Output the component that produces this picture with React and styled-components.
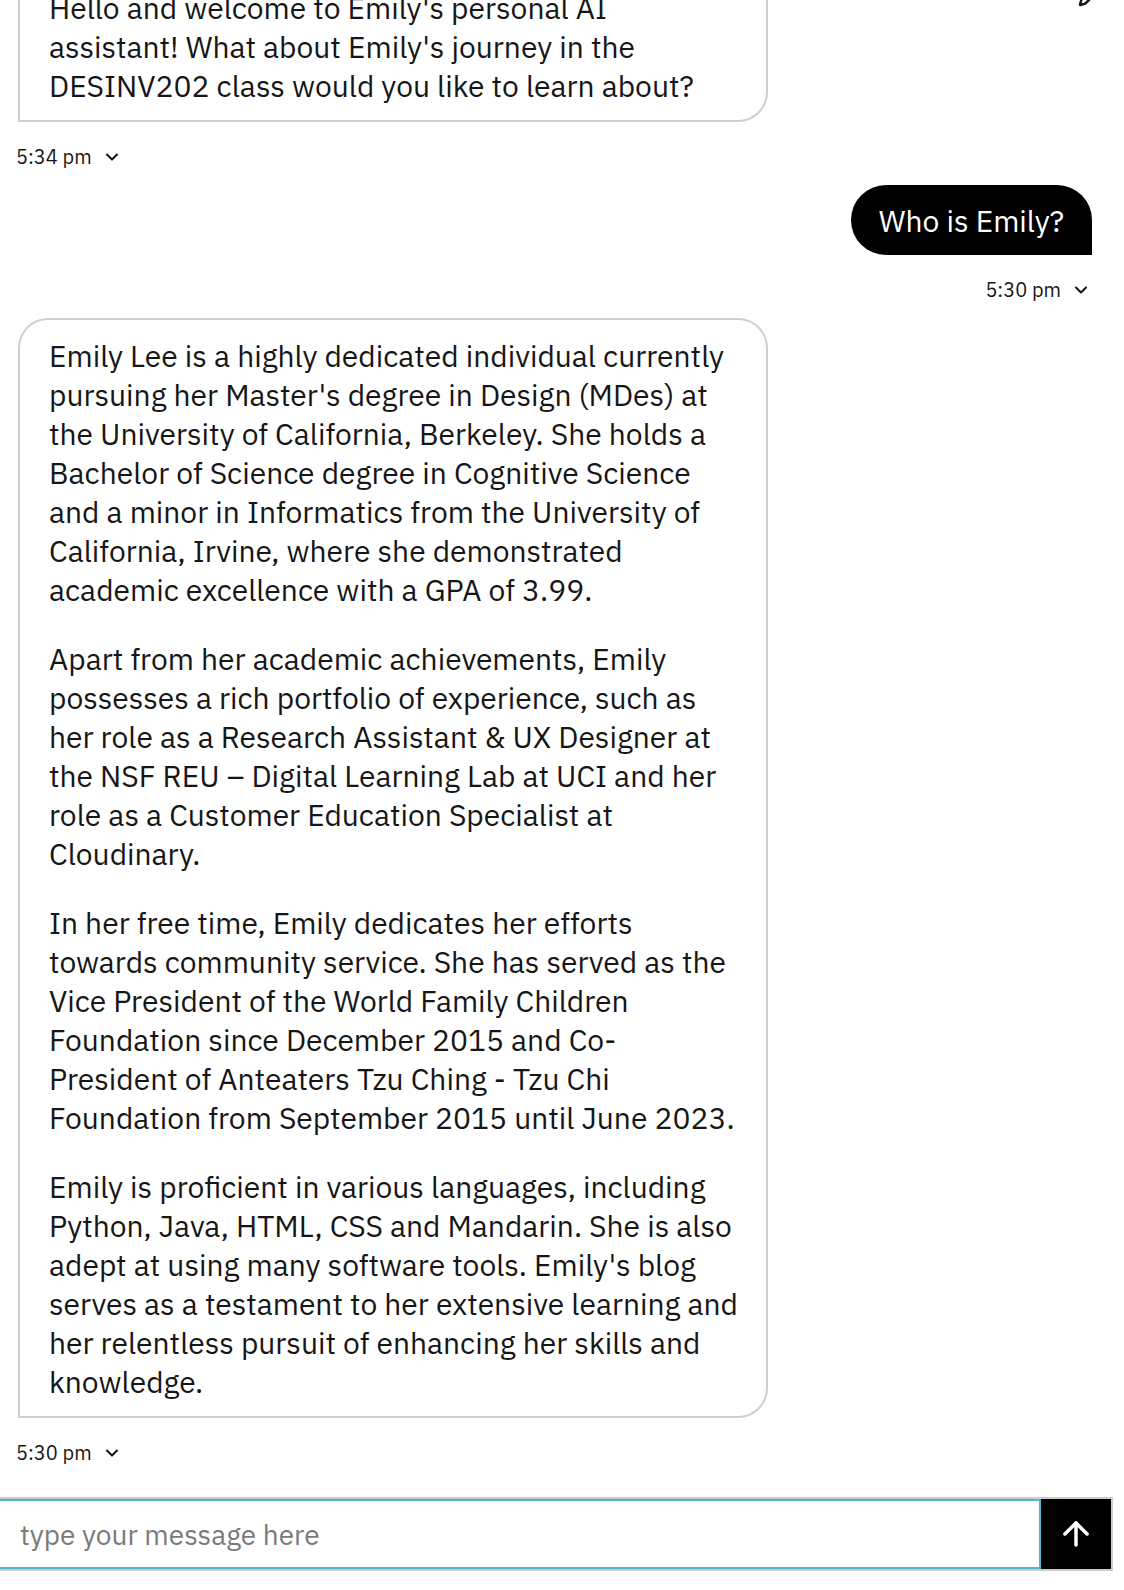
import styled, { createGlobalStyle } from "styled-components";
import { ArrowUp, ChevronDown, Pencil } from "lucide-react";

const GlobalStyle = createGlobalStyle`
  * {
    box-sizing: border-box;
  }
  body {
    margin: 0;
    background: #ffffff;
    color: #161616;
    font-family: "IBM Plex Sans", "Noto Sans", "Liberation Sans", sans-serif;
  }
`;

const StyledPage = styled.div`
  position: relative;
  height: 100vh;
  display: flex;
  flex-direction: column;
  overflow: hidden;
`;

const StyledCornerIcon = styled.div`
  position: absolute;
  top: -17px;
  right: 22px;
  color: #161616;
`;

const StyledMessageList = styled.div`
  flex: 1;
  display: flex;
  flex-direction: column;
  justify-content: flex-end;
  overflow: hidden;
  padding: 0 32px 32px 16px;
`;

const StyledGroup = styled.div`
  display: flex;
  flex-direction: column;
  align-items: ${(p) => (p.$mine ? "flex-end" : "flex-start")};
  margin-top: 16px;
  flex-shrink: 0;
`;

const StyledBotBubble = styled.div`
  width: 750px;
  margin-left: 2px;
  padding: 16px 26px 15px 29px;
  border: 2px solid #cfcfcf;
  border-radius: 30px 30px 30px 0;
  font-size: 30px;
  line-height: 39px;

  p {
    margin: 0;
  }
  p + p {
    margin-top: 30px;
  }
`;

const StyledUserBubble = styled.div`
  display: flex;
  align-items: center;
  height: 70px;
  padding: 0 28px;
  background: #000000;
  color: #ffffff;
  border-radius: 35px 35px 0 35px;
  font-size: 30px;
`;

const StyledMeta = styled.div`
  display: flex;
  align-items: center;
  gap: 10px;
  margin-top: 23px;
  padding-right: ${(p) => (p.$mine ? "1px" : "0")};
  font-size: 20px;
  line-height: 24px;
`;

const StyledComposer = styled.form`
  display: flex;
  margin: 0 11px 19px 0;
  border: 2px solid #cccccc;
  border-left: none;
`;

const StyledInput = styled.input`
  flex: 1;
  height: 70px;
  padding: 0 20px;
  border: 2px solid #4db6c9;
  border-left: none;
  font-family: inherit;
  font-size: 28px;
  color: #161616;
  outline: none;

  &::placeholder {
    color: #7a7a7a;
  }
`;

const StyledSendButton = styled.button`
  width: 70px;
  display: flex;
  align-items: center;
  justify-content: center;
  padding: 0;
  border: none;
  background: #000000;
  color: #ffffff;
`;

const botParagraphs = [
  "Emily Lee is a highly dedicated individual currently pursuing her Master's degree in Design (MDes) at the University of California, Berkeley. She holds a Bachelor of Science degree in Cognitive Science and a minor in Informatics from the University of California, Irvine, where she demonstrated academic excellence with a GPA of 3.99.",
  "Apart from her academic achievements, Emily possesses a rich portfolio of experience, such as her role as a Research Assistant & UX Designer at the NSF REU – Digital Learning Lab at UCI and her role as a Customer Education Specialist at Cloudinary.",
  "In her free time, Emily dedicates her efforts towards community service. She has served as the Vice President of the World Family Children Foundation since December 2015 and Co-President of Anteaters Tzu Ching - Tzu Chi Foundation from September 2015 until June 2023.",
  "Emily is proficient in various languages, including Python, Java, HTML, CSS and Mandarin. She is also adept at using many software tools. Emily's blog serves as a testament to her extensive learning and her relentless pursuit of enhancing her skills and knowledge.",
];

function Meta({ time, mine }) {
  return (
    <StyledMeta $mine={mine}>
      {time}
      <ChevronDown size={20} strokeWidth={2.5} />
    </StyledMeta>
  );
}

function App() {
  return (
    <>
      <GlobalStyle />
      <StyledPage>
        <StyledCornerIcon>
          <Pencil size={24} strokeWidth={2.5} />
        </StyledCornerIcon>
        <StyledMessageList>
          <StyledGroup>
            <StyledBotBubble>
              <p>
                Hello and welcome to Emily's personal AI assistant! What about
                Emily's journey in the DESINV202 class would you like to learn
                about?
              </p>
            </StyledBotBubble>
            <Meta time="5:34 pm" />
          </StyledGroup>
          <StyledGroup $mine>
            <StyledUserBubble>Who is Emily?</StyledUserBubble>
            <Meta time="5:30 pm" mine />
          </StyledGroup>
          <StyledGroup>
            <StyledBotBubble>
              {botParagraphs.map((text, i) => (
                <p key={i}>{text}</p>
              ))}
            </StyledBotBubble>
            <Meta time="5:30 pm" />
          </StyledGroup>
        </StyledMessageList>
        <StyledComposer onSubmit={(e) => e.preventDefault()}>
          <StyledInput placeholder="type your message here" />
          <StyledSendButton type="submit">
            <ArrowUp size={38} strokeWidth={2.2} />
          </StyledSendButton>
        </StyledComposer>
      </StyledPage>
    </>
  );
}

export default App;
